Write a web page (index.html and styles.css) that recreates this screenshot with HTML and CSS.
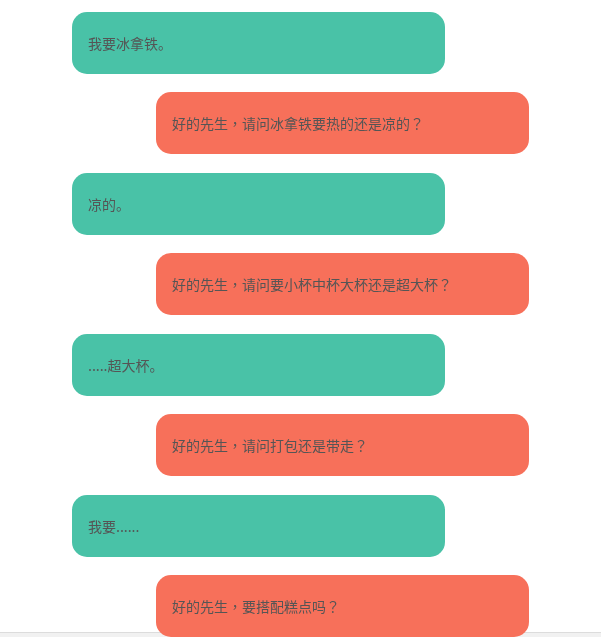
FILE: index.html
```html
<!DOCTYPE html>
<html lang="zh-CN">
<head>
<meta charset="utf-8">
<title>Chat</title>
<link rel="stylesheet" href="styles.css">
</head>
<body>
<div class="chat">
  <div class="bubble me">我要冰拿铁。</div>
  <div class="bubble you">好的先生<span class="p">，</span>请问冰拿铁要热的还是凉的<span class="p">？</span></div>
  <div class="bubble me">凉的。</div>
  <div class="bubble you">好的先生<span class="p">，</span>请问要小杯中杯大杯还是超大杯<span class="p">？</span></div>
  <div class="bubble me">.....超大杯。</div>
  <div class="bubble you">好的先生<span class="p">，</span>请问打包还是带走<span class="p">？</span></div>
  <div class="bubble me">我要......</div>
  <div class="bubble you">好的先生<span class="p">，</span>要搭配糕点吗<span class="p">？</span></div>
</div>
<div class="hbar"></div>
</body>
</html>
```
FILE: styles.css
```css
html, body {
  margin: 0;
  padding: 0;
  background: #ffffff;
  overflow: hidden;
}
body {
  font-family: "Noto Sans CJK SC", "Noto Sans", sans-serif;
  font-size: 14px;
  color: #555555;
}
.chat {
  width: 457px;
  margin: 0 auto;
  padding-top: 12px;
  display: flex;
  flex-direction: column;
  gap: 18.49px;
  position: relative;
  z-index: 2;
}
.bubble {
  width: 373px;
  box-sizing: border-box;
  height: 62px;
  padding: 0 16px;
  display: flex;
  align-items: center;
  border-radius: 15px;
  line-height: 20px;
  white-space: pre;
}
.p {
  display: inline-block;
  width: 1em;
  text-align: center;
  font-family: "Noto Sans CJK TC", sans-serif;
  font-feature-settings: "chws" 0, "halt" 0;
}
.me {
  align-self: flex-start;
  background: #49c2a7;
}
.you {
  align-self: flex-end;
  background: #f7705a;
}
.hbar {
  position: fixed;
  left: 0;
  right: 0;
  bottom: 0;
  height: 4px;
  background: #f1f1f1;
  border-top: 1px solid #dcdcdc;
  z-index: 1;
}
```
